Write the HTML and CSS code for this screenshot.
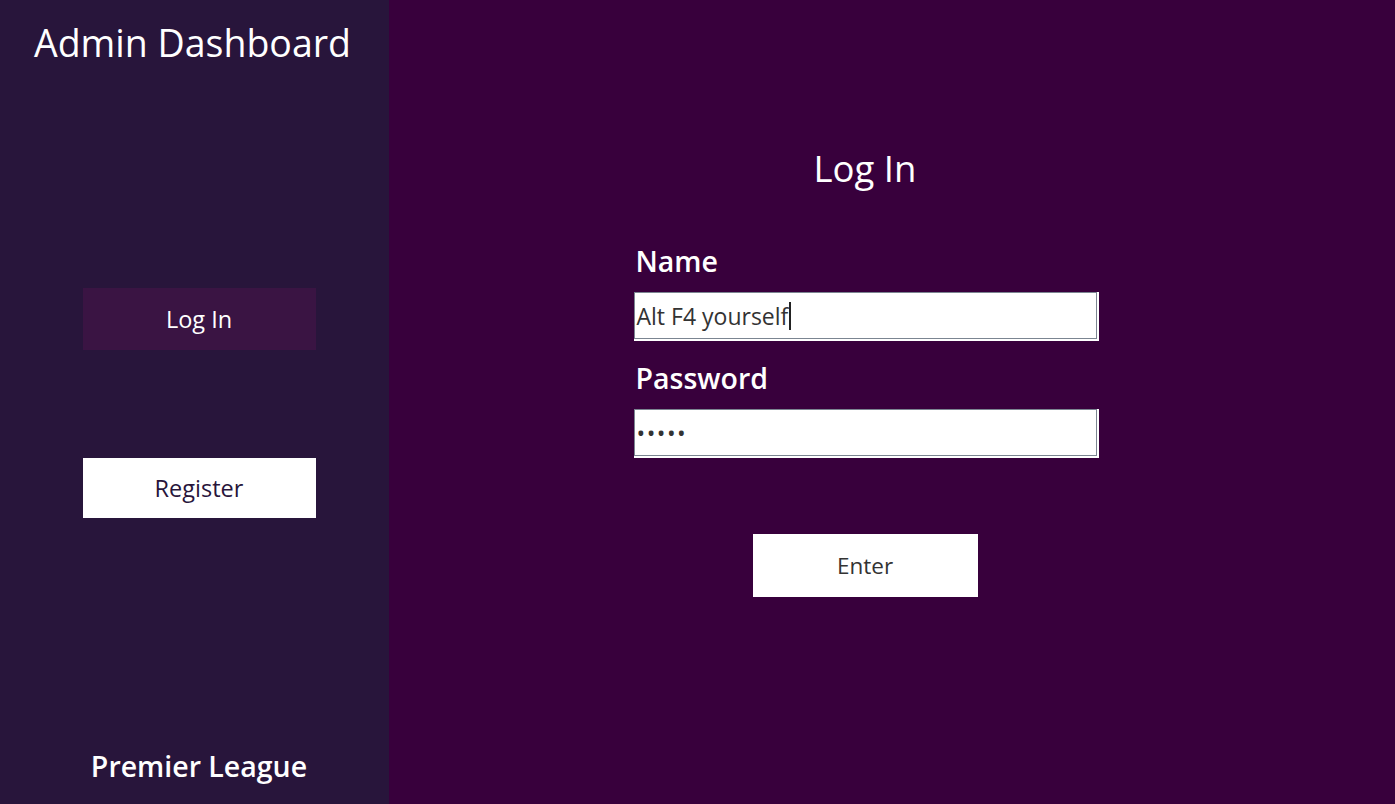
FILE: index.html
```html
<!DOCTYPE html>
<html lang="en">
<head>
<meta charset="utf-8">
<title>Admin Dashboard</title>
<link rel="stylesheet" href="styles.css">
</head>
<body>
<div class="app">
  <aside class="sidebar">
    <h1 class="brand">Admin Dashboard</h1>
    <nav class="nav">
      <button class="nav-btn nav-btn--active">Log In</button>
      <button class="nav-btn nav-btn--light">Register</button>
    </nav>
    <div class="footer">Premier League</div>
  </aside>
  <main class="main">
    <h2 class="title">Log In</h2>
    <form class="form">
      <label class="label">Name</label>
      <div class="field"><span class="field-text">Alt F4 yourself</span><span class="caret"></span></div>
      <label class="label label--second">Password</label>
      <div class="field"><span class="field-text field-dots">&bull;&bull;&bull;&bull;&bull;</span></div>
      <button type="button" class="enter">Enter</button>
    </form>
  </main>
</div>
</body>
</html>
```
FILE: styles.css
```css
* { box-sizing: border-box; }
html, body { margin: 0; padding: 0; height: 100%; }
body {
  font-family: "Open Sans", "Noto Sans", sans-serif;
  background: #38003c;
}
.app {
  display: flex;
  height: 804px;
}
.sidebar {
  width: 389px;
  flex: none;
  background: #28153b;
  display: flex;
  flex-direction: column;
  align-items: center;
  padding-left: 9px;
}
.brand {
  margin: 16px 13px 0 0;
  font-size: 37.5px;
  font-weight: 400;
  color: #fff;
  line-height: 54px;
}
.nav {
  display: flex;
  flex-direction: column;
  align-items: center;
  margin-top: 218px;
}
.nav-btn {
  width: 233px;
  border: none;
  font-family: inherit;
  font-size: 23.5px;
  font-weight: 400;
  padding: 0;
}
.nav-btn--active {
  height: 62px;
  background: #3a1443;
  color: #fff;
}
.nav-btn--light {
  height: 60px;
  margin-top: 108px;
  background: #fff;
  color: #28153b;
}
.footer {
  margin-top: auto;
  margin-bottom: 18px;
  color: #fff;
  font-size: 28.5px;
  font-weight: 600;
  line-height: 40px;
}
.main {
  flex: 1;
  display: flex;
  flex-direction: column;
  align-items: center;
  padding-right: 54px;
}
.title {
  margin: 142px 0 0;
  font-size: 36.5px;
  font-weight: 400;
  color: #fff;
  line-height: 52px;
}
.form {
  width: 463px;
  display: flex;
  flex-direction: column;
  margin-top: 48px;
}
.label {
  color: #fff;
  font-size: 28.5px;
  font-weight: 600;
  line-height: 38px;
  padding-left: 2px;
}
.label--second { margin-top: 20px; }
.field {
  height: 47px;
  margin-top: 12px;
  background: #fff;
  border: 1px solid #7b8591;
  box-shadow: 1px 1px 0 1px #fff;
  display: flex;
  align-items: center;
  padding-left: 2px;
}
.field-text {
  color: #333;
  font-size: 23px;
}
.field-dots { letter-spacing: 1.5px; }
.caret {
  width: 2px;
  height: 28px;
  background: #222;
  margin-left: 1px;
}
.enter {
  align-self: center;
  width: 225px;
  height: 63px;
  margin-top: 78px;
  border: none;
  background: #fff;
  color: #333;
  font-family: inherit;
  font-size: 22.5px;
  font-weight: 400;
  padding: 0;
}
```
